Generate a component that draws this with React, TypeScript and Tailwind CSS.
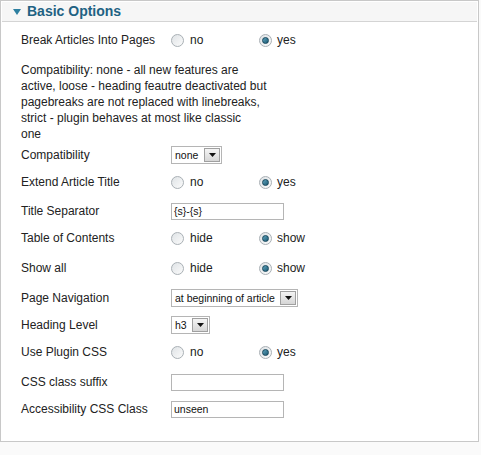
import React from "react";

function Radio({ checked }: { checked?: boolean }) {
  return (
    <span className="relative inline-flex h-[13px] w-[13px] shrink-0 items-center justify-center rounded-full border border-[#a9b0b5] bg-gradient-to-br from-[#dfe3e6] to-[#fbfbfb]">
      {checked && (
        <span className="h-[7px] w-[7px] rounded-full border border-[#14455a] bg-gradient-to-br from-[#5fa4be] to-[#1b5a73]" />
      )}
    </span>
  );
}

function RadioPair({ a, b }: { a: string; b: string }) {
  return (
    <div className="flex items-center">
      <div className="flex w-[88px] items-center">
        <Radio />
        <span className="ml-[6px]">{a}</span>
      </div>
      <div className="flex items-center">
        <Radio checked />
        <span className="ml-[5px]">{b}</span>
      </div>
    </div>
  );
}

function Select({ value, width }: { value: string; width: string }) {
  return (
    <div className={`flex h-[18px] items-center justify-between border border-[#b5b5b5] bg-white pl-[3px] pr-[1px] text-[10.5px] text-[#111] ${width}`}>
      <span className="leading-none">{value}</span>
      <span className="flex h-[14px] w-[16px] items-center justify-center border border-[#a0a0a0] bg-gradient-to-b from-[#f4f4f4] to-[#d6d6d6]">
        <svg width="7" height="4" viewBox="0 0 7 4">
          <path d="M0 0 L7 0 L3.5 4 Z" fill="#111" />
        </svg>
      </span>
    </div>
  );
}

function TextInput({ value }: { value?: string }) {
  return (
    <div className="flex h-[17px] w-[113px] items-center border border-[#b5b5b5] bg-white pl-[2px] text-[10.5px] leading-none text-[#111]">
      {value}
    </div>
  );
}

function Row({ label, mt, children }: { label: string; mt: string; children: React.ReactNode }) {
  return (
    <div className={`flex h-[22px] items-center ${mt}`}>
      <div className="w-[150px] shrink-0">{label}</div>
      {children}
    </div>
  );
}

export default function App() {
  return (
    <div
      className="h-[455px] w-[481px] bg-[#fafafa] text-[12px] text-[#222]"
      style={{ fontFamily: '"Liberation Sans", Arial, sans-serif' }}
    >
      <div className="h-[442px] w-[479px] border border-[#c8c8c8] bg-white">
        <div className="m-[1px] flex h-[20px] items-center border-b border-[#d4d4d4] bg-[#f6f6f6] pl-[11px]">
          <svg width="8" height="6" viewBox="0 0 8 6" className="mt-[1px]">
            <path d="M0 0 L8 0 L4 6 Z" fill="#2d7fa0" />
          </svg>
          <span className="ml-[6px] text-[14px] font-bold text-[#1f6283]">Basic Options</span>
        </div>
        <div className="pl-[20px]">
          <Row label="Break Articles Into Pages" mt="mt-[7px]">
            <RadioPair a="no" b="yes" />
          </Row>
          <p className="mt-[11px] whitespace-nowrap leading-[16px]">
            Compatibility: none - all new features are
            <br />
            active, loose - heading feautre deactivated but
            <br />
            pagebreaks are not replaced with linebreaks,
            <br />
            strict - plugin behaves at most like classic
            <br />
            one
          </p>
          <Row label="Compatibility" mt="mt-[2px]">
            <Select value="none" width="w-[51px]" />
          </Row>
          <Row label="Extend Article Title" mt="mt-[5px]">
            <RadioPair a="no" b="yes" />
          </Row>
          <Row label="Title Separator" mt="mt-[7px]">
            <TextInput value="{s}-{s}" />
          </Row>
          <Row label="Table of Contents" mt="mt-[5px]">
            <RadioPair a="hide" b="show" />
          </Row>
          <Row label="Show all" mt="mt-[8px]">
            <RadioPair a="hide" b="show" />
          </Row>
          <Row label="Page Navigation" mt="mt-[8px]">
            <Select value="at beginning of article" width="w-[127px]" />
          </Row>
          <Row label="Heading Level" mt="mt-[5px]">
            <Select value="h3" width="w-[39px]" />
          </Row>
          <Row label="Use Plugin CSS" mt="mt-[5px]">
            <RadioPair a="no" b="yes" />
          </Row>
          <Row label="CSS class suffix" mt="mt-[8px]">
            <TextInput />
          </Row>
          <Row label="Accessibility CSS Class" mt="mt-[5px]">
            <TextInput value="unseen" />
          </Row>
        </div>
      </div>
    </div>
  );
}
